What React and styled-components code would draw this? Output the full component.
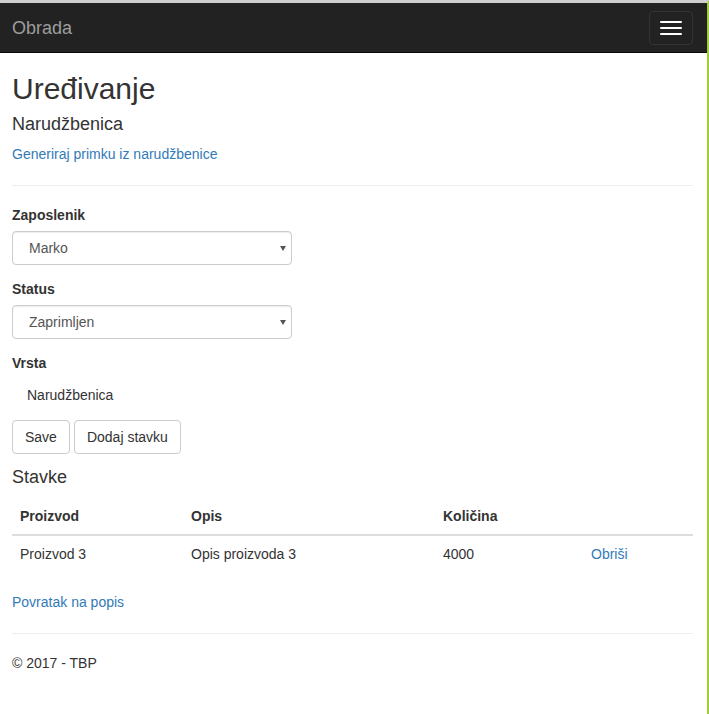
import React from "react";
import styled, { createGlobalStyle } from "styled-components";

const GlobalStyle = createGlobalStyle`
  html, body {
    margin: 0;
    padding: 0;
    background: #fff;
  }
  body {
    font-family: "Liberation Sans", Arial, sans-serif;
    font-size: 14px;
    line-height: 1.42857;
    color: #333;
  }
  * {
    box-sizing: border-box;
  }
`;

const Page = styled.div`
  width: 709px;
  min-height: 714px;
  border-top: 3px solid #cfcfcf;
  border-right: 2px solid #9fd03c;
  display: flex;
  flex-direction: column;
`;

const Navbar = styled.nav`
  height: 50px;
  background-color: #222;
  border-bottom: 1px solid #080808;
  display: flex;
  align-items: flex-start;
  justify-content: space-between;
  padding: 0 14px 0 12px;
`;

const Brand = styled.a`
  font-size: 18px;
  line-height: 20px;
  padding: 15px 0;
  color: #9d9d9d;
  text-decoration: none;
`;

const Toggle = styled.button`
  margin-top: 8px;
  width: 44px;
  height: 34px;
  padding: 9px 10px;
  background: transparent;
  border: 1px solid #333;
  border-radius: 4px;
  display: flex;
  flex-direction: column;
  gap: 4px;
  align-items: center;
  justify-content: center;
`;

const Bar = styled.span`
  display: block;
  width: 22px;
  height: 2px;
  border-radius: 1px;
  background: #fff;
`;

const Content = styled.main`
  padding: 19px 0 0 12px;
  width: 693px;
`;

const Title = styled.h2`
  margin: 0 0 10px;
  font-size: 30px;
  font-weight: 500;
  line-height: 1.1;
`;

const Subtitle = styled.h4`
  margin: ${(p) => (p.$top ? p.$top : "10px")} 0 10px;
  font-size: 18px;
  font-weight: 500;
  line-height: 1.1;
`;

const Para = styled.p`
  margin: 0 0 10px;
`;

const Link = styled.a`
  color: #337ab7;
  text-decoration: none;
`;

const Rule = styled.hr`
  margin: 20px 0;
  border: 0;
  border-top: 1px solid #eee;
`;

const FormGroup = styled.div`
  margin-bottom: 15px;
`;

const Label = styled.label`
  display: inline-block;
  margin-bottom: 5px;
  font-weight: 700;
`;

const SelectWrap = styled.div`
  position: relative;
  width: 280px;

  &::after {
    content: "";
    position: absolute;
    right: 6px;
    top: 15px;
    border-left: 3.5px solid transparent;
    border-right: 3.5px solid transparent;
    border-top: 5px solid #555;
    pointer-events: none;
  }
`;

const Select = styled.select`
  display: block;
  width: 100%;
  height: 34px;
  padding: 6px 12px 6px 16px;
  font-family: inherit;
  font-size: 14px;
  color: #555;
  background: #fff;
  border: 1px solid #ccc;
  border-radius: 4px;
  box-shadow: inset 0 1px 1px rgba(0, 0, 0, 0.075);
  appearance: none;
`;

const StaticValue = styled.div`
  min-height: 34px;
  padding: 7px 0 7px 15px;
  margin-bottom: 7px;
`;

const Actions = styled.div`
  display: flex;
  gap: 4px;
  margin-bottom: 14px;
`;

const Button = styled.button`
  height: 34px;
  padding: 6px 12px;
  font-family: inherit;
  font-size: 14px;
  line-height: 20px;
  color: #333;
  background: #fff;
  border: 1px solid #ccc;
  border-radius: 4px;
`;

const Table = styled.table`
  width: 681px;
  border-collapse: collapse;
  table-layout: fixed;
  margin-bottom: 21px;
`;

const Th = styled.th`
  width: ${(p) => p.$w}px;
  padding: 8px;
  text-align: left;
  font-weight: 700;
  line-height: 20px;
  border-bottom: 2px solid #ddd;
`;

const Td = styled.td`
  padding: 8px;
  line-height: 20px;
`;

const Footer = styled.footer`
  p {
    margin: 0 0 10px;
  }
`;

const items = [{ name: "Proizvod 3", desc: "Opis proizvoda 3", qty: 4000 }];

export default function App() {
  return (
    <>
      <GlobalStyle />
      <Page>
        <Navbar>
          <Brand href="#">Obrada</Brand>
          <Toggle aria-label="menu">
            <Bar />
            <Bar />
            <Bar />
          </Toggle>
        </Navbar>
        <Content>
          <Title>Uređivanje</Title>
          <Subtitle>Narudžbenica</Subtitle>
          <Para>
            <Link href="#">Generiraj primku iz narudžbenice</Link>
          </Para>
          <Rule />

          <FormGroup>
            <Label>Zaposlenik</Label>
            <SelectWrap>
              <Select defaultValue="Marko">
                <option>Marko</option>
              </Select>
            </SelectWrap>
          </FormGroup>
          <FormGroup>
            <Label>Status</Label>
            <SelectWrap>
              <Select defaultValue="Zaprimljen">
                <option>Zaprimljen</option>
              </Select>
            </SelectWrap>
          </FormGroup>
          <Label>Vrsta</Label>
          <StaticValue>Narudžbenica</StaticValue>
          <Actions>
            <Button>Save</Button>
            <Button>Dodaj stavku</Button>
          </Actions>

          <Subtitle $top="0">Stavke</Subtitle>
          <Table>
            <thead>
              <tr>
                <Th $w={171}>Proizvod</Th>
                <Th $w={252}>Opis</Th>
                <Th $w={148}>Količina</Th>
                <Th $w={110}></Th>
              </tr>
            </thead>
            <tbody>
              {items.map((it) => (
                <tr key={it.name}>
                  <Td>{it.name}</Td>
                  <Td>{it.desc}</Td>
                  <Td>{it.qty}</Td>
                  <Td>
                    <Link href="#">Obriši</Link>
                  </Td>
                </tr>
              ))}
            </tbody>
          </Table>
          <Para>
            <Link href="#">Povratak na popis</Link>
          </Para>
          <Rule />
          <Footer>
            <p>© 2017 - TBP</p>
          </Footer>
        </Content>
      </Page>
    </>
  );
}
